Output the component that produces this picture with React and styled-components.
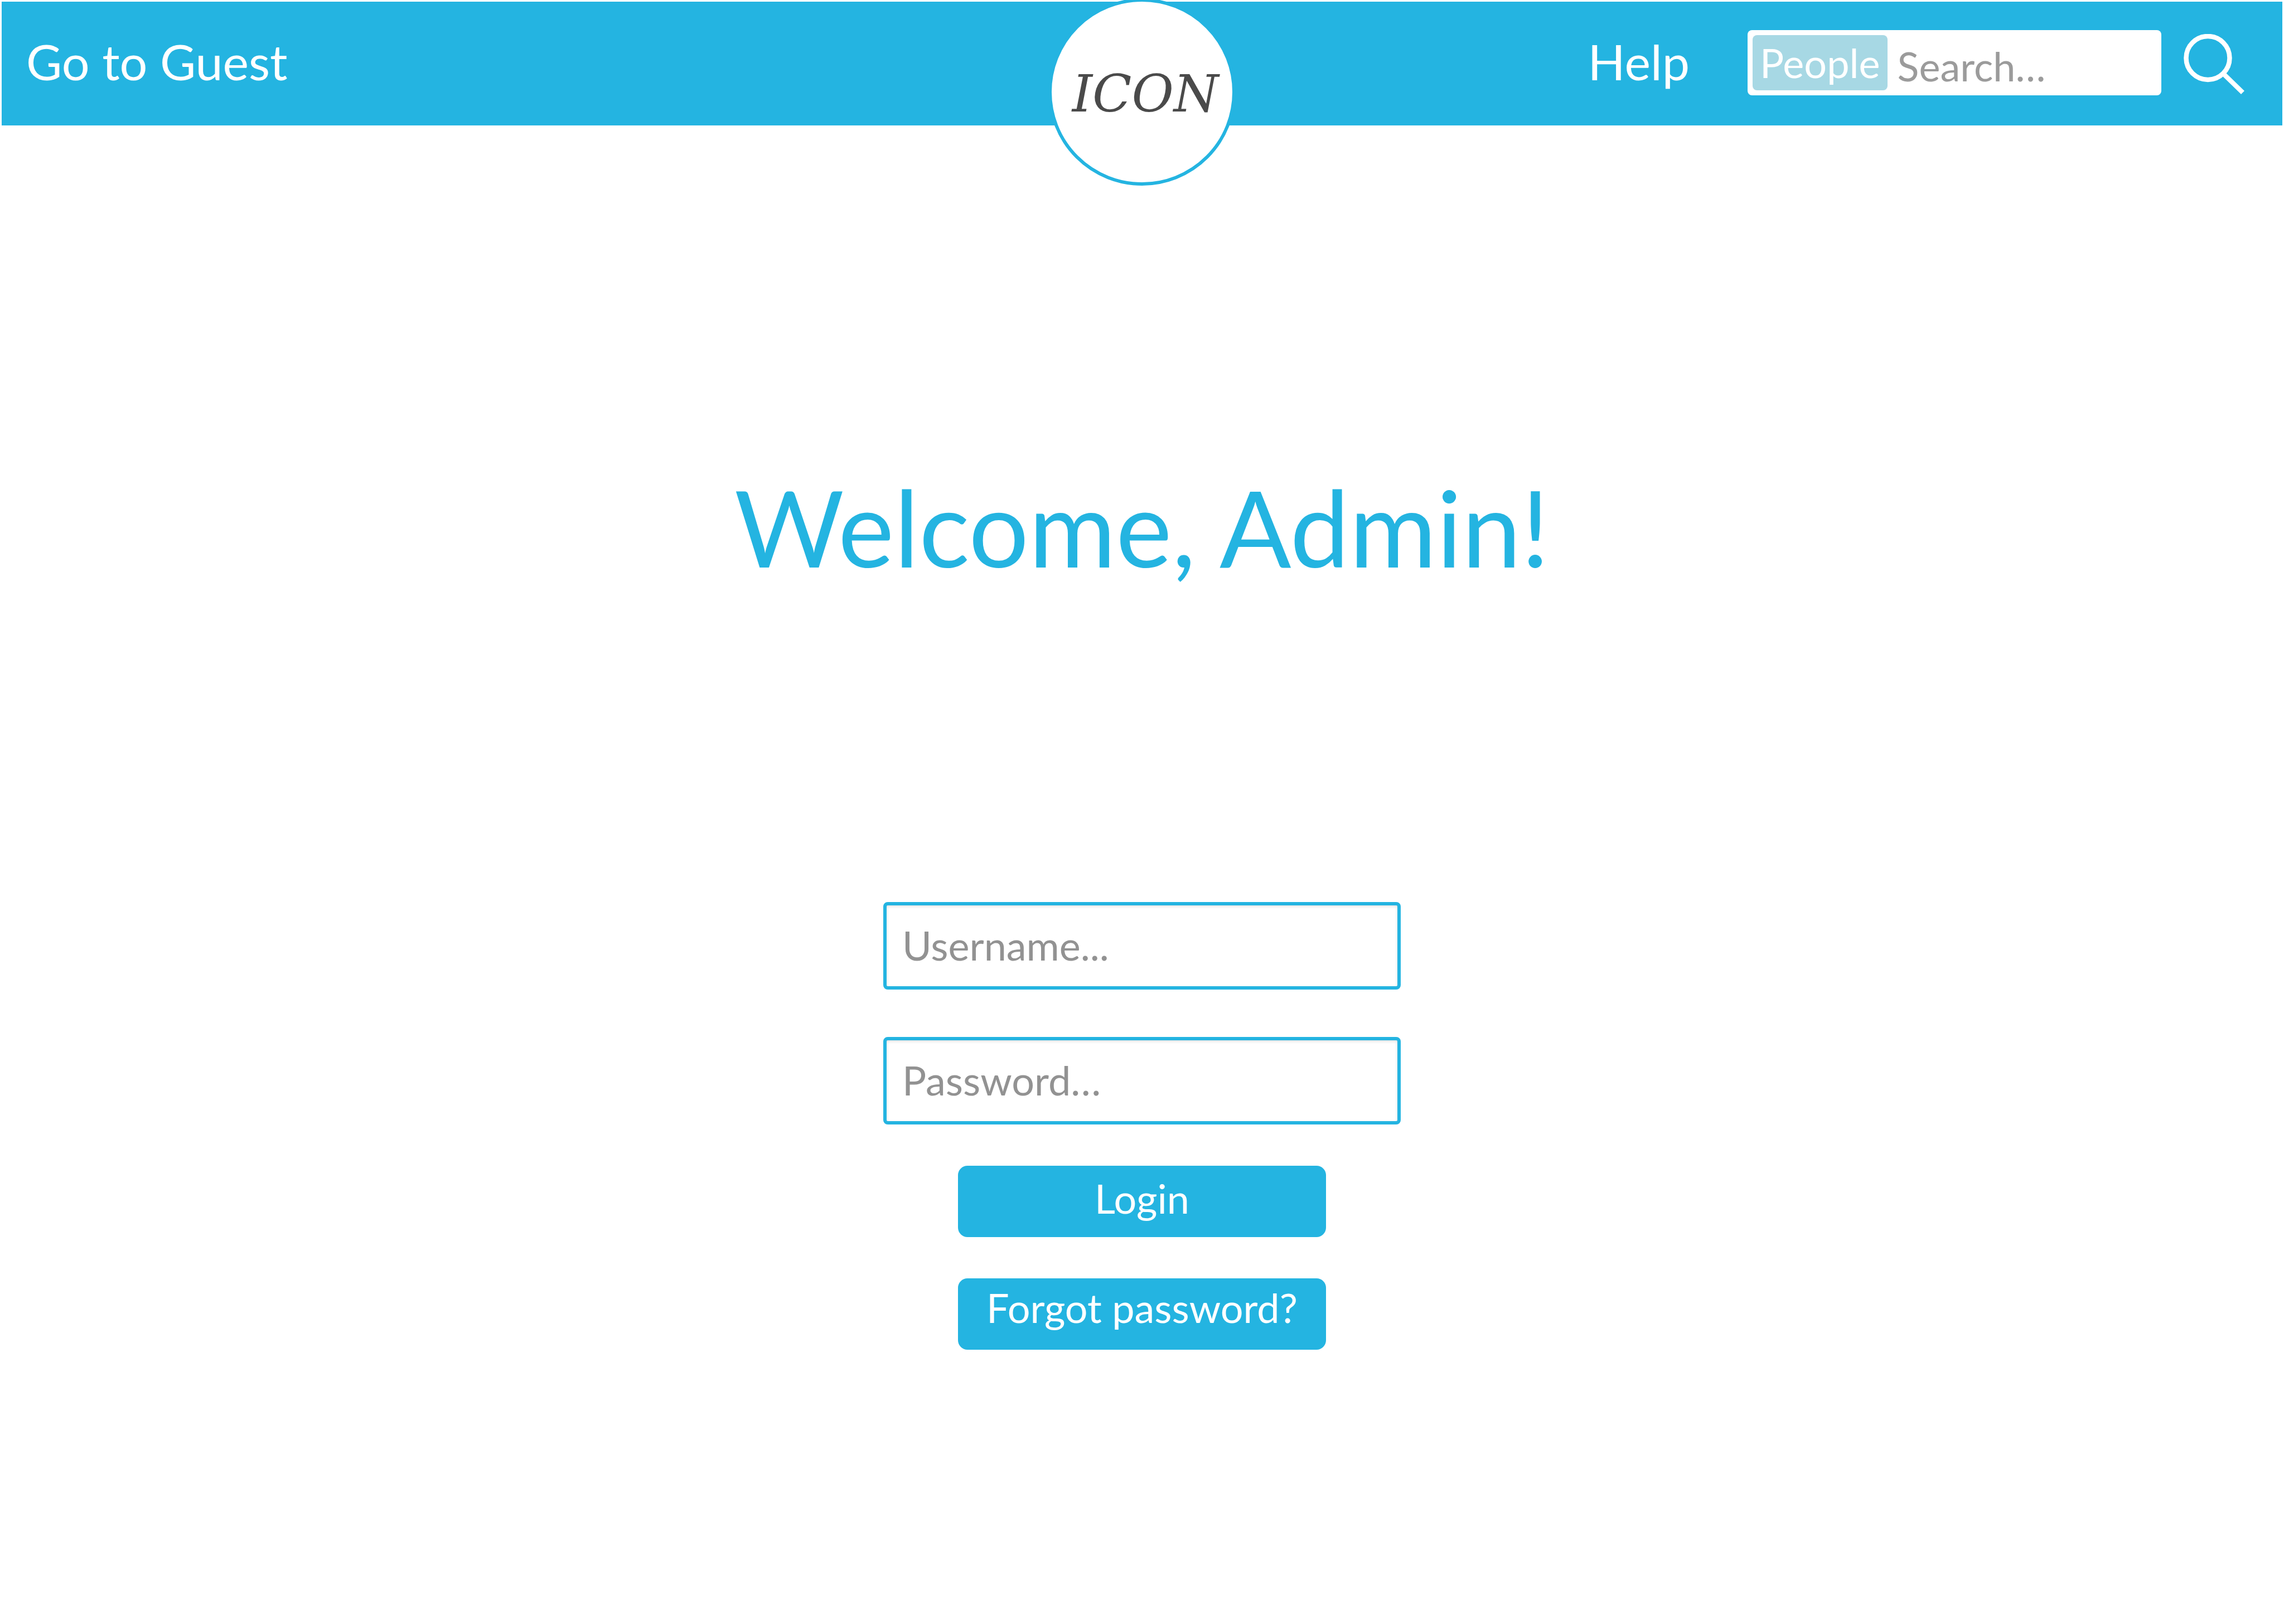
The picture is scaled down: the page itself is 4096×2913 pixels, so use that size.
import React from "react";
import styled, { createGlobalStyle } from "styled-components";

const color = {
  brand: "#24b4e1",
  chip: "#a7d8e4",
  hint: "#929292",
  searchHint: "#9b9b9b",
  ink: "#4a4a4a",
  white: "#ffffff",
};

const GlobalStyle = createGlobalStyle`
  *, *::before, *::after { box-sizing: border-box; }
  body {
    margin: 0;
    background: ${color.white};
    font-family: Lato, "Open Sans", sans-serif;
    font-size: 72px;
    line-height: 1.2;
  }
  button, input { font: inherit; }
`;

const TopBar = styled.header`
  position: relative;
  display: flex;
  align-items: center;
  justify-content: space-between;
  margin: 3px 3px 0;
  padding: 51px 67px 54px 44px;
  background: ${color.brand};
`;

const Tools = styled.div`
  display: flex;
  align-items: center;
`;

const NavLink = styled.a`
  padding-bottom: 6px;
  color: ${color.white};
  font-size: 88px;
  line-height: 106px;
  text-decoration: none;
`;

const Badge = styled.a`
  position: absolute;
  top: -6px;
  left: 50%;
  display: flex;
  align-items: center;
  justify-content: center;
  width: 336px;
  height: 336px;
  padding: 8px 0 0 12px;
  border: 6px solid ${color.brand};
  border-radius: 50%;
  background: ${color.white};
  color: ${color.ink};
  font-family: "DejaVu Serif", serif;
  font-size: 92px;
  font-style: italic;
  text-decoration: none;
  transform: translateX(-50%);
`;

const SearchForm = styled.form`
  display: flex;
  align-items: center;
  gap: 40px;
  margin-left: 104px;
`;

const SearchBox = styled.div`
  display: flex;
  width: 742px;
  height: 117px;
  padding: 9px;
  border-radius: 8px;
  background: ${color.white};
`;

const ScopeButton = styled.button`
  flex: none;
  padding: 0 13px;
  border: 0;
  border-radius: 8px;
  background: ${color.chip};
  color: ${color.white};
`;

const SearchInput = styled.input`
  flex: 1;
  min-width: 0;
  padding: 12px 0 0 18px;
  border: 0;
  outline: 0;
  background: transparent;
  color: ${color.ink};
  &::placeholder { color: ${color.searchHint}; opacity: 1; }
`;

const IconButton = styled.button`
  display: flex;
  padding: 6px 0 0;
  border: 0;
  background: none;
  color: ${color.white};
`;

const Main = styled.main`
  display: flex;
  flex-direction: column;
  align-items: center;
  gap: 560px;
  padding: 605px 48px 493px;
`;

const Title = styled.h1`
  margin: 0;
  color: ${color.brand};
  font-size: 190px;
  font-weight: 400;
  line-height: 228px;
`;

const LoginForm = styled.form`
  display: flex;
  flex-direction: column;
  align-items: center;
  gap: 74px;
  width: 100%;
  max-width: 928px;
`;

const Fields = styled.div`
  display: flex;
  flex-direction: column;
  gap: 85px;
  width: 100%;
`;

const Field = styled.input`
  width: 100%;
  height: 157px;
  padding: 0 28px 4px;
  border: 6px solid ${color.brand};
  border-radius: 8px;
  outline: 0;
  background: ${color.white};
  box-shadow: inset 0 2px 5px rgba(0, 0, 0, 0.12);
  color: ${color.ink};
  &::placeholder { color: ${color.hint}; opacity: 1; }
`;

const SubmitButton = styled.button`
  width: 660px;
  max-width: 100%;
  height: 128px;
  padding: 0 0 12px;
  border: 0;
  border-radius: 17px;
  background: ${color.brand};
  color: ${color.white};
`;

const ForgotLink = styled.a`
  display: flex;
  align-items: center;
  justify-content: center;
  width: 660px;
  max-width: 100%;
  height: 128px;
  padding-bottom: 24px;
  border-radius: 17px;
  background: ${color.brand};
  color: ${color.white};
  text-decoration: none;
`;

function SearchIcon() {
  return (
    <svg width="110" height="110" viewBox="0 0 110 110" fill="none" stroke="currentColor" strokeWidth="8.5" aria-hidden="true">
      <circle cx="43.5" cy="43" r="39" />
      <path d="M71 71 L106 105" />
    </svg>
  );
}

const hold = (event) => event.preventDefault();

export default function App() {
  return (
    <>
      <GlobalStyle />
      <TopBar>
        <NavLink href="#guest">Go to Guest</NavLink>
        <Badge href="#home">ICON</Badge>
        <Tools>
          <NavLink href="#help">Help</NavLink>
          <SearchForm role="search" onSubmit={hold}>
            <SearchBox>
              <ScopeButton type="button">People</ScopeButton>
              <SearchInput type="text" aria-label="Search" placeholder="Search…" />
            </SearchBox>
            <IconButton type="submit" aria-label="Search">
              <SearchIcon />
            </IconButton>
          </SearchForm>
        </Tools>
      </TopBar>
      <Main>
        <Title>Welcome, Admin!</Title>
        <LoginForm onSubmit={hold}>
          <Fields>
            <Field type="text" aria-label="Username" placeholder="Username..." />
            <Field type="password" aria-label="Password" placeholder="Password…" />
          </Fields>
          <SubmitButton type="submit">Login</SubmitButton>
          <ForgotLink href="#forgot">Forgot password?</ForgotLink>
        </LoginForm>
      </Main>
    </>
  );
}
